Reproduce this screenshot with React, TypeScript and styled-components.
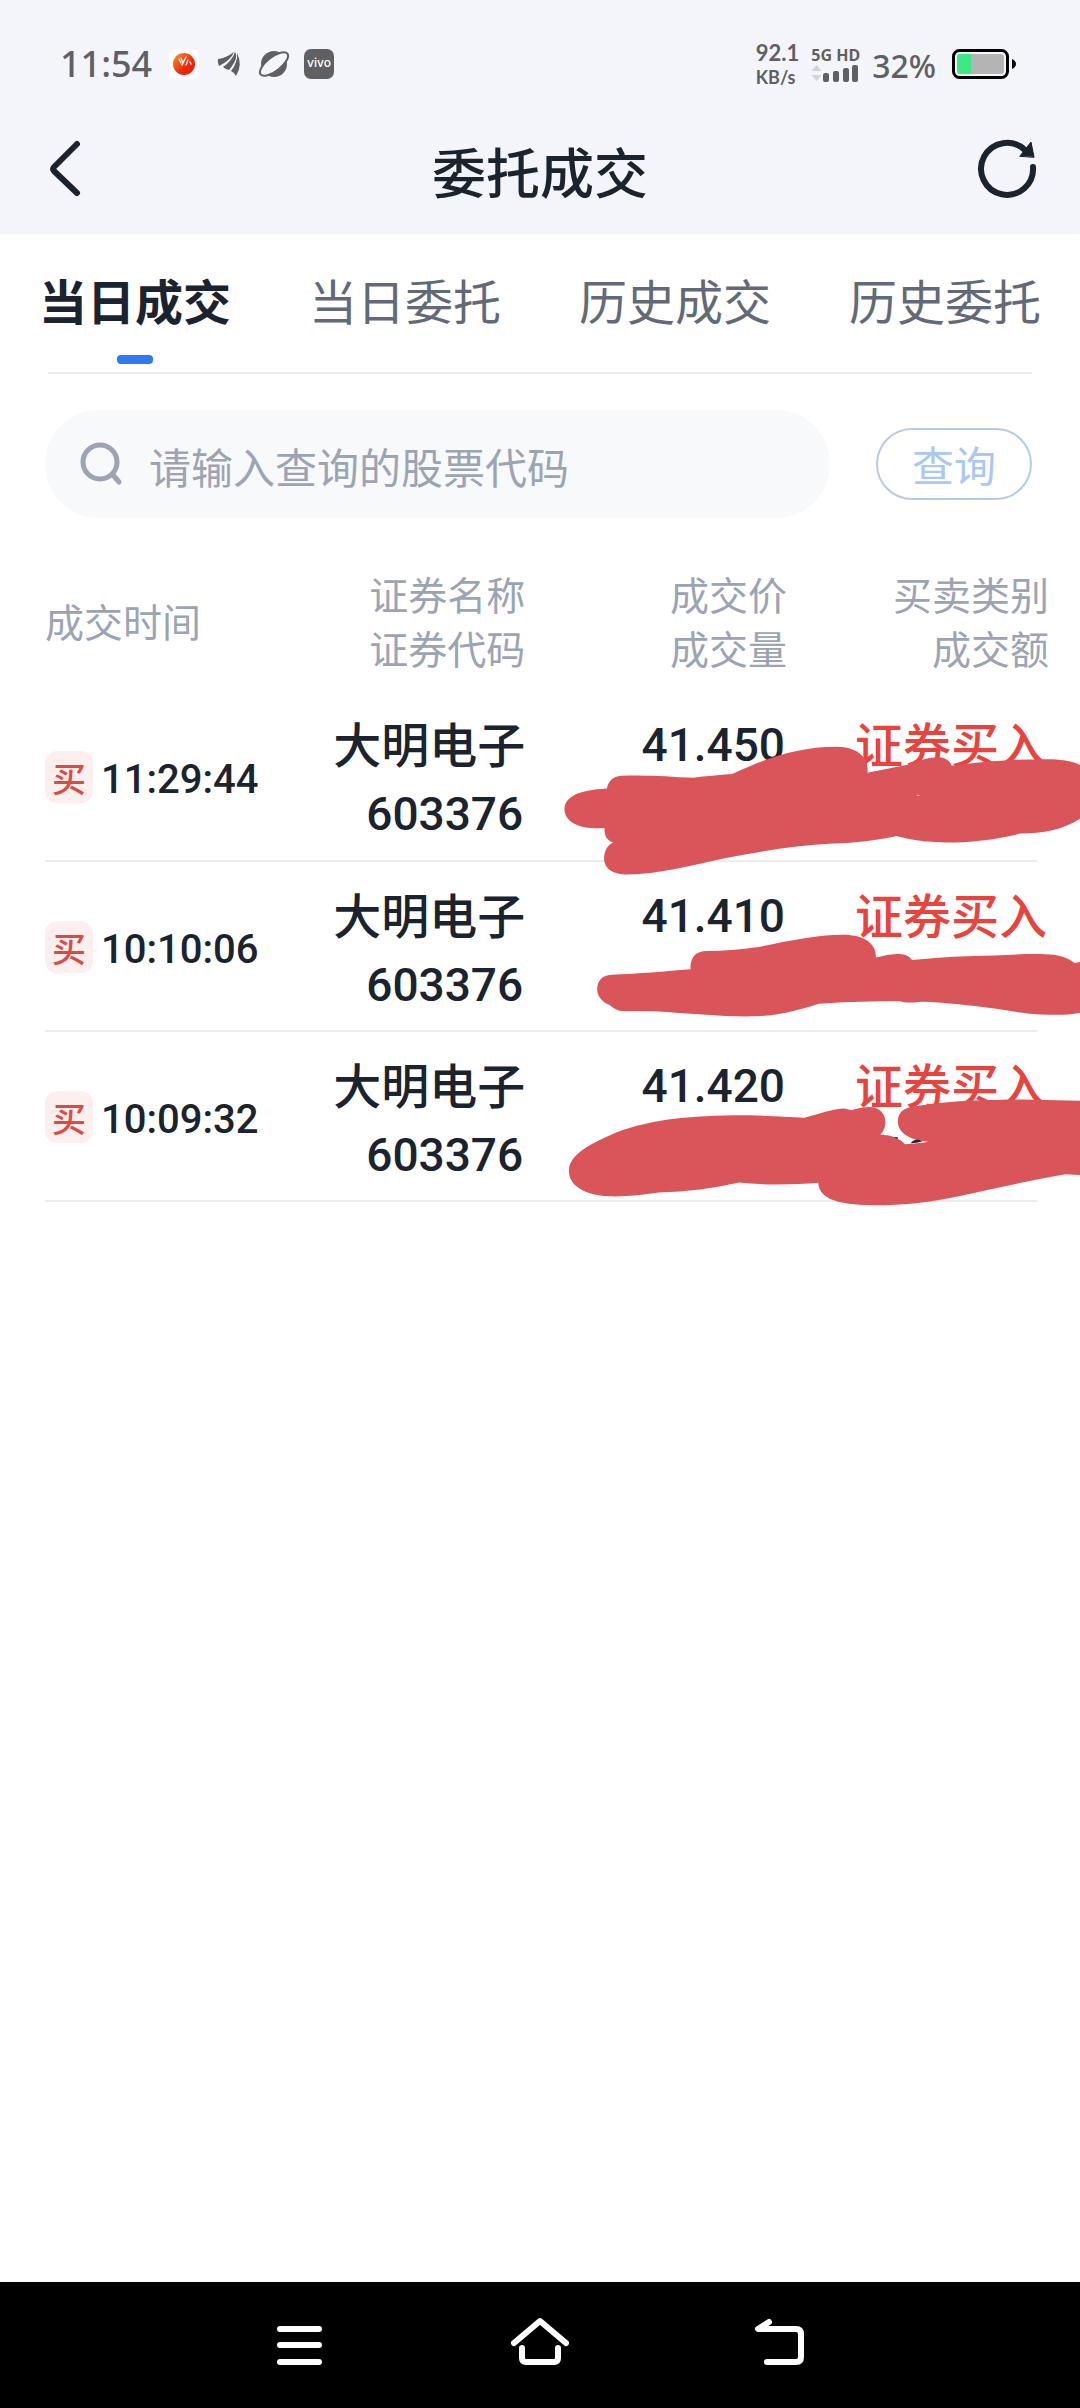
import React from "react";
import styled, { createGlobalStyle } from "styled-components";

const cjk = `"Noto Sans CJK SC", sans-serif`;
const ink = "#1b232e";
const muted = "#9ca4b4";
const red = "#e8433c";

const GlobalStyle = createGlobalStyle`
  * { box-sizing: border-box; }
  body { margin: 0; background: #fff; font-family: Roboto, ${cjk}; color: ${ink}; }
  button, input { font: inherit; color: inherit; margin: 0; padding: 0; border: 0; background: none; }
`;

const Screen = styled.div`
  min-height: 100vh;
  display: flex;
  flex-direction: column;
  overflow-x: hidden;
`;

const Top = styled.header`
  background: #f4f5fa;
  height: 234px;
`;

const StatusBar = styled.div`
  height: 120px;
  padding: 8px 64px 0 60px;
  display: flex;
  align-items: center;
  justify-content: space-between;
  color: #606062;
  font-family: "Noto Sans", sans-serif;
`;

const StatusGroup = styled.div<{ $gap: number }>`
  display: flex;
  align-items: center;
  gap: ${(p) => p.$gap}px;
`;

const Clock = styled.span`
  font-size: 36px;
  font-weight: 500;
  line-height: 40px;
`;

const Percent = styled.span`
  margin-right: 4px;
  padding-top: 4px;
  font-size: 32px;
  font-weight: 500;
  line-height: 40px;
`;

const Stack = styled.div`
  display: flex;
  flex-direction: column;
  font-weight: 600;
`;

const Speed = styled.span<{ $size: number }>`
  font-family: Lato, sans-serif;
  font-size: ${(p) => p.$size}px;
  font-weight: 700;
  line-height: ${(p) => p.$size + 4}px;
`;

const Network = styled.span`
  font-size: 16px;
  line-height: 18px;
  font-weight: 700;
`;

const TitleBar = styled.div`
  height: 106px;
  padding: 0 40px 10px;
  display: grid;
  grid-template-columns: 1fr auto 1fr;
  align-items: center;
`;

const IconButton = styled.button<{ $end?: boolean }>`
  display: flex;
  justify-self: ${(p) => (p.$end ? "end" : "start")};
  height: 60px;
  cursor: pointer;
`;

const Title = styled.h1`
  margin: 0;
  padding-top: 6px;
  font: 500 54px/80px ${cjk};
`;

const Tabs = styled.nav`
  display: grid;
  grid-template-columns: repeat(4, 1fr);
  height: 138px;
`;

const Tab = styled.button<{ $active?: boolean }>`
  display: flex;
  flex-direction: column;
  align-items: center;
  padding-top: 29px;
  gap: 20px;
  font: ${(p) => (p.$active ? 700 : 400)} 48px/72px ${cjk};
  color: ${(p) => (p.$active ? ink : "#626a78")};
  cursor: pointer;

  &::after {
    content: "";
    width: 36px;
    height: 9px;
    border-radius: 4px;
    background: ${(p) => (p.$active ? "#2f79f2" : "transparent")};
  }
`;

const Search = styled.form`
  margin: 0 48px;
  padding-top: 36px;
  border-top: 2px solid #ececec;
  display: flex;
  align-items: center;
  gap: 46px;
`;

const Field = styled.label`
  flex: 1;
  min-width: 0;
  height: 108px;
  margin-left: -3px;
  padding: 0 34px;
  border-radius: 54px;
  background: #f8f9fb;
  display: flex;
  align-items: center;
  gap: 26px;
`;

const Input = styled.input`
  flex: 1;
  min-width: 0;
  height: 66px;
  padding-top: 2px;
  outline: 0;
  && { font: 400 42px/64px ${cjk}; }
  &::placeholder { color: ${muted}; opacity: 1; }
`;

const Submit = styled.button`
  && {
    width: 156px;
    height: 72px;
    border: 2px solid #b5cbe8;
    border-radius: 36px;
    color: #abc8f5;
    font: 400 42px/64px ${cjk};
    cursor: pointer;
  }
`;

const TableWrap = styled.div`
  position: relative;
  padding: 48px 43px 0 45px;
`;

const Table = styled.table`
  width: 100%;
  border-collapse: collapse;
  table-layout: fixed;
`;

const Col = styled.col<{ $width?: string }>`
  width: ${(p) => p.$width ?? "auto"};
`;

const HeadCell = styled.th<{ $first?: boolean }>`
  height: 125px;
  padding: ${(p) => (p.$first ? 27 : 0)}px 0 0;
  text-align: ${(p) => (p.$first ? "left" : "right")};
  vertical-align: top;
  font: 400 39px/54px ${cjk};
  color: ${muted};
  white-space: nowrap;
`;

const HeadRow = styled.tr`
  & > th:last-child > div { margin-right: -12px; }
`;

const Row = styled.tr`
  border-bottom: 2px solid #ececec;
  & > td:last-child > div { margin-right: -10px; }
`;

const Cell = styled.td<{ $first?: boolean }>`
  height: 170px;
  padding: ${(p) => (p.$first ? 2 : 17)}px 0 0;
  text-align: ${(p) => (p.$first ? "left" : "right")};
  vertical-align: ${(p) => (p.$first ? "middle" : "top")};
  white-space: nowrap;
`;

const TimeBox = styled.div`
  display: flex;
  align-items: center;
  gap: 8px;
`;

const Time = styled.time`
  padding-top: 6px;
  font-size: 40px;
  font-weight: 500;
  line-height: 52px;
`;

const Badge = styled.span`
  width: 48px;
  height: 52px;
  border-radius: 12px;
  background: #feefef;
  color: #dd4a43;
  text-align: center;
  font: 500 34px/54px ${cjk};
`;

const Name = styled.div<{ $buy?: boolean }>`
  font: 500 48px/69px ${cjk};
  color: ${(p) => (p.$buy ? red : ink)};
`;

const Figure = styled.div`
  padding: 3px 2px 0 0;
  font-size: 46px;
  font-weight: 500;
  line-height: 69px;
`;

const Scribble = styled.svg`
  position: absolute;
  right: 0;
  top: 172px;
  pointer-events: none;
`;

const NavBar = styled.footer`
  margin-top: auto;
  height: 126px;
  padding: 0 180px;
  background: #000;
  display: grid;
  grid-template-columns: repeat(3, 1fr);
  align-items: center;
  justify-items: center;
`;

const NavButton = styled.button`
  display: flex;
  cursor: pointer;
`;

const tabs = ["当日成交", "当日委托", "历史成交", "历史委托"];

const deals = [
  { time: "11:29:44", name: "大明电子", code: "603376", price: "41.450", kind: "证券买入" },
  { time: "10:10:06", name: "大明电子", code: "603376", price: "41.410", kind: "证券买入" },
  { time: "10:09:32", name: "大明电子", code: "603376", price: "41.420", kind: "证券买入" },
];

const StatusIcons = () => (
  <svg width="166" height="30" viewBox="0 0 166 30" aria-hidden="true">
    <defs>
      <linearGradient id="sun" x1="0" y1="0" x2="1" y2="1">
        <stop offset="0" stopColor="#f39a2c" />
        <stop offset="0.6" stopColor="#ee2a0c" />
        <stop offset="1" stopColor="#e01808" />
      </linearGradient>
    </defs>
    <rect width="30" height="30" rx="5" fill="#fff" />
    <circle cx="15" cy="15" r="11" fill="url(#sun)" />
    <path d="M10 10l2 4M12 9l2 5M17 8l-4 8M19 11l-2 5M21 13l1 2" stroke="#fff" strokeWidth="1.3" strokeLinecap="round" />
    <g fill="#606062">
      <path d="M49 10Q57 9 65 3Q62 11 50 17Q48 13 49 10Z" />
      <path d="M54 18Q63 12 66 3Q70 9 60 21Q56 20 54 18Z" />
      <path d="M62 22Q69 13 68 4Q74 16 67 27Q66 24 62 22Z" />
    </g>
    <circle cx="105" cy="15" r="13" fill="#606062" />
    <ellipse cx="105" cy="15" rx="17" ry="7" transform="rotate(-38 105 15)" fill="#f4f5fa" stroke="#606062" strokeWidth="2" />
    <rect x="135" width="30" height="30" rx="7" fill="#606062" />
    <text x="150" y="18" textAnchor="middle" fontFamily="Inter, sans-serif" fontSize="12" fontWeight="500" fill="#fff">vivo</text>
  </svg>
);

const Signal = () => (
  <svg width="48" height="18" viewBox="0 0 48 18" aria-hidden="true">
    <path d="M5.500 1l5 6h-10zM5.500 17l5-6h-10z" fill="#d2d3d6" />
    <g fill="#606062">
      <rect x="12" y="9" width="6" height="9" rx="2" />
      <rect x="22" y="7" width="6" height="11" rx="2" />
      <rect x="32" y="4" width="6" height="14" rx="2" />
      <rect x="41" y="1" width="6" height="17" rx="2" />
    </g>
  </svg>
);

const Battery = () => (
  <svg width="64" height="30" viewBox="0 0 64 30" aria-hidden="true">
    <rect x="1.500" y="1.500" width="54" height="27" rx="6" fill="#f4f5fa" stroke="#000" strokeWidth="3" />
    <rect x="5" y="5" width="47" height="20" rx="3" fill="#b4b4b4" />
    <path d="M8 5h11v20H8a3 3 0 0 1-3-3V8a3 3 0 0 1 3-3z" fill="#3fe887" />
    <path d="M60 10q4 2 4 5t-4 5z" fill="#000" />
  </svg>
);

export default function App() {
  return (
    <Screen>
      <GlobalStyle />
      <Top>
        <StatusBar>
          <StatusGroup $gap={17}>
            <Clock>11:54</Clock>
            <StatusIcons />
          </StatusGroup>
          <StatusGroup $gap={12}>
            <Stack>
              <Speed $size={22}>92.1</Speed>
              <Speed $size={18}>KB/s</Speed>
            </Stack>
            <Stack>
              <Network>5G HD</Network>
              <Signal />
            </Stack>
            <Percent>32%</Percent>
            <Battery />
          </StatusGroup>
        </StatusBar>
        <TitleBar>
          <IconButton type="button" aria-label="返回">
            <svg width="50" height="60" viewBox="0 0 50 60" fill="none" stroke={ink} strokeWidth="6" strokeLinecap="round" strokeLinejoin="round">
              <path d="M37 6L14 29Q12 31 14 33L37 55" />
            </svg>
          </IconButton>
          <Title>委托成交</Title>
          <IconButton type="button" aria-label="刷新" $end>
            <svg width="66" height="60" viewBox="0 0 66 60" fill="none" stroke={ink} strokeWidth="6" strokeLinecap="round">
              <path d="M59 29A26 26 0 1 1 51 12" />
              <path d="M46 18L57 4L60 19z" fill={ink} stroke={ink} strokeWidth="1" strokeLinejoin="round" />
            </svg>
          </IconButton>
        </TitleBar>
      </Top>
      <Tabs>
        {tabs.map((t, i) => (
          <Tab key={t} type="button" $active={i === 0}>{t}</Tab>
        ))}
      </Tabs>
      <Search onSubmit={(e) => e.preventDefault()}>
        <Field>
          <svg width="44" height="44" viewBox="0 0 44 44" fill="none" stroke={muted} strokeWidth="5" strokeLinecap="round" aria-hidden="true">
            <circle cx="21" cy="20" r="17" />
            <path d="M34 33l6 7" />
          </svg>
          <Input type="text" aria-label="股票代码" placeholder="请输入查询的股票代码" />
        </Field>
        <Submit type="submit">查询</Submit>
      </Search>
      <TableWrap>
        <Table>
          <colgroup>
            <Col $width="23%" />
            <Col />
            <Col $width="26.4%" />
            <Col $width="25.2%" />
          </colgroup>
          <thead>
            <HeadRow>
              <HeadCell $first scope="col">成交时间</HeadCell>
              <HeadCell scope="col"><div>证券名称</div><div>证券代码</div></HeadCell>
              <HeadCell scope="col"><div>成交价</div><div>成交量</div></HeadCell>
              <HeadCell scope="col"><div>买卖类别</div><div>成交额</div></HeadCell>
            </HeadRow>
          </thead>
          <tbody>
            {deals.map((d) => (
              <Row key={d.time}>
                <Cell $first><TimeBox><Badge>买</Badge><Time>{d.time}</Time></TimeBox></Cell>
                <Cell><Name>{d.name}</Name><Figure>{d.code}</Figure></Cell>
                <Cell><Figure>{d.price}</Figure></Cell>
                <Cell><Name $buy>{d.kind}</Name></Cell>
              </Row>
            ))}
          </tbody>
        </Table>
        <Scribble width="540" height="540" viewBox="0 0 1568 1568" aria-hidden="true">
          <g fill="#da555a">
            <path d="M194 286C200 262 212 250 240 249C310 246 380 252 445 255C480 250 520 247 558 244C640 205 740 165 860 165C915 165 955 190 951 240L1070 216C1110 200 1135 195 1160 195C1180 197 1192 208 1195 220C1290 207 1370 201 1460 201C1510 200 1550 206 1568 218V374C1520 405 1460 417 1395 417C1320 435 1250 443 1180 443C1120 441 1070 435 1036 424C970 438 920 443 850 446C740 452 640 468 540 488C430 512 340 535 255 536C205 536 186 515 186 488C187 465 197 450 213 443C195 438 187 425 187 401C120 406 71 385 71 346C72 310 110 291 194 286Z" />
            <path d="M437 811C436 778 450 758 485 758C530 757 580 754 635 746C720 730 800 711 880 711C945 711 978 740 975 777C1010 769 1030 766 1050 767C1066 769 1074 775 1080 784C1160 776 1240 772 1320 771C1370 768 1420 766 1465 767C1505 767 1535 777 1552 793L1568 790V937C1540 943 1510 944 1480 943C1420 942 1370 933 1320 925C1240 914 1170 907 1110 905C1080 908 1060 909 1045 904C960 903 880 906 810 911C740 932 690 948 600 948C520 948 430 939 330 933L235 932C220 930 210 922 202 915C180 904 166 890 166 868C167 845 180 828 208 827C290 824 360 817 437 811Z" />
            <path d="M84 1396C84 1355 130 1325 200 1294C310 1245 450 1234 610 1235C670 1236 720 1240 768 1242C810 1230 850 1216 885 1215L905 1220C930 1213 945 1211 960 1211C1004 1212 1016 1265 988 1291C1025 1293 1045 1304 1060 1319C1085 1318 1105 1316 1128 1312C1080 1307 1039 1290 1039 1252C1040 1220 1065 1212 1090 1209C1170 1195 1260 1190 1400 1189L1568 1193V1408L1525 1406C1410 1426 1290 1455 1190 1475C1110 1491 1040 1497 960 1496C870 1494 810 1480 808 1431C730 1437 650 1438 578 1430C500 1447 430 1457 345 1459C290 1466 245 1472 200 1470C130 1467 84 1440 84 1396Z" />
          </g>
          <path d="M1092 307Q1098 301 1104 307Z" fill="#fbe9ea" />
          <path d="M1026 1298L1040 1299 1038 1304ZM1076 1316Q1092 1297 1110 1311L1094 1315Z" fill="#3a2030" />
        </Scribble>
      </TableWrap>
      <NavBar>
        <NavButton type="button" aria-label="菜单">
          <svg width="60" height="60" viewBox="0 0 60 60" stroke="#fff" strokeWidth="6" strokeLinecap="round">
            <path d="M10 14h39M10 30h39M10 47h39" />
          </svg>
        </NavButton>
        <NavButton type="button" aria-label="主页">
          <svg width="60" height="60" viewBox="0 0 60 60" fill="none" stroke="#fff" strokeWidth="6" strokeLinecap="round" strokeLinejoin="round">
            <path d="M4 28L30 6L56 28" />
            <path d="M12 33V43Q12 47 16 47H44Q48 47 48 43V33" />
          </svg>
        </NavButton>
        <NavButton type="button" aria-label="后退">
          <svg width="60" height="60" viewBox="0 0 60 60" fill="none" stroke="#fff" strokeWidth="6" strokeLinecap="round" strokeLinejoin="round">
            <path d="M19 7L8 14H46Q51 14 51 19V42Q51 47 46 47H17" />
          </svg>
        </NavButton>
      </NavBar>
    </Screen>
  );
}
